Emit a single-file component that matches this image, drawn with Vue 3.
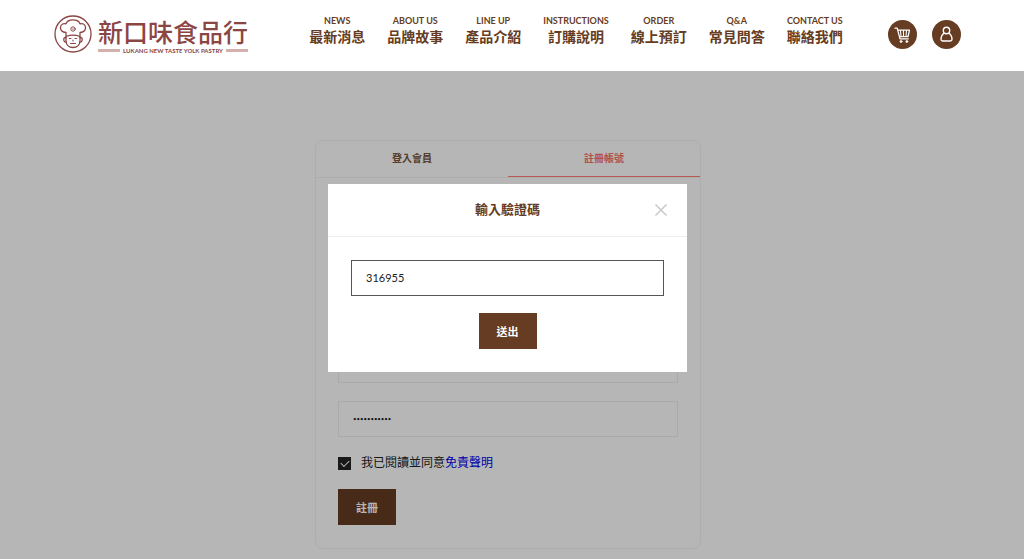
<script setup>
import { ref } from 'vue'

const links = [
  { en: 'NEWS', zh: '最新消息' },
  { en: 'ABOUT US', zh: '品牌故事' },
  { en: 'LINE UP', zh: '產品介紹' },
  { en: 'INSTRUCTIONS', zh: '訂購說明' },
  { en: 'ORDER', zh: '線上預訂' },
  { en: 'Q&A', zh: '常見問答' },
  { en: 'CONTACT US', zh: '聯絡我們' },
]
const name = ref('')
const email = ref('')
const phone = ref('')
const password = ref('abcdefghijk')
const agreed = ref(true)
const code = ref('316955')
const open = ref(true)
</script>

<template>
  <div class="page">
    <header class="header">
      <a class="logo" href="#">
        <svg class="chef" viewBox="0 0 38 38" fill="none" stroke="#8b4644" stroke-width="1.3" stroke-linecap="round" stroke-linejoin="round" aria-hidden="true">
          <circle cx="19" cy="19" r="18" />
          <path d="M12 21.500V17.500C8 17.500 6 14.800 6.500 12C7 9.200 9.800 8 12 8.800C12.800 6.200 15.500 4.800 19 4.800C22.500 4.800 25.200 6.200 26 8.800C28.200 8 31 9.200 31.500 12C32 14.800 30 17.500 26 17.500V21.500Q19 18.800 12 21.500Z" />
          <path d="M12 22V26.500Q12.700 32.500 19 32.500Q25.300 32.500 26 26.500V22" />
          <path d="M12 22.500Q9.500 22.300 9.800 25Q10.200 27.500 12.300 27M26 22.500Q28.500 22.300 28.200 25Q27.800 27.500 25.700 27" />
          <circle cx="19" cy="14" r="2.200" stroke-width="1" />
          <path d="M19 13.700V14.300M15.300 23.500H17M21 23.500H22.700M19 25V26M16.500 28.500H21.500" stroke-width="1.100" />
        </svg>
        <span class="brand">
          <span class="brand-name">新口味食品行</span>
          <span class="tagline"><i></i><span>LUKANG NEW TASTE YOLK PASTRY</span><i></i></span>
        </span>
      </a>
      <nav class="nav" aria-label="主選單">
        <a v-for="link in links" :key="link.en" href="#">
          <span class="en">{{ link.en }}</span>
          <span class="zh">{{ link.zh }}</span>
        </a>
      </nav>
      <div class="tools">
        <button type="button" aria-label="購物車">
          <svg viewBox="0 0 29 29" fill="none" stroke="#fff" stroke-width="1.300" stroke-linecap="round" stroke-linejoin="round">
            <path d="M7 8.200H9.200L12 18.800H20.300M9.700 10.200H21.500L20 16.600H11.400" />
            <path d="M12.500 10.500L13 16.300M15.500 10.500V16.300M18.500 10.500L18 16.300" stroke-width="1.100" />
            <circle cx="13" cy="21.500" r="1" fill="#fff" stroke-width=".8" />
            <circle cx="18.800" cy="21.500" r="1" fill="#fff" stroke-width=".8" />
          </svg>
        </button>
        <button type="button" aria-label="會員">
          <svg viewBox="0 0 29 29" fill="none" stroke="#fff" stroke-width="1.400" stroke-linejoin="round">
            <circle cx="14.500" cy="10.500" r="3.200" />
            <path d="M12.300 13C10 14.600 9 17 9 19.300Q9 21 10.700 21H18.300Q20 21 20 19.300C20 17 19 14.600 16.700 13" />
          </svg>
        </button>
      </div>
    </header>

    <main class="main">
      <section class="card">
        <div class="tabs" role="tablist">
          <button type="button" role="tab" aria-selected="false">登入會員</button>
          <button type="button" role="tab" aria-selected="true" class="active">註冊帳號</button>
        </div>
        <form class="form" @submit.prevent>
          <input v-model="name" class="field" type="text" aria-label="姓名">
          <input v-model="email" class="field" type="email" aria-label="電子郵件">
          <input v-model="phone" class="field" type="tel" aria-label="手機">
          <input v-model="password" class="field password" type="password" aria-label="密碼">
          <div class="agree">
            <input id="agree" v-model="agreed" type="checkbox">
            <label for="agree">我已閱讀並同意<a href="#">免責聲明</a></label>
          </div>
          <button class="submit" type="submit">註冊</button>
        </form>
      </section>
    </main>

    <div v-if="open" class="overlay">
      <div class="modal" role="dialog" aria-modal="true" aria-labelledby="modal-title">
        <div class="modal-head">
          <h2 id="modal-title">輸入驗證碼</h2>
          <button type="button" class="close" aria-label="關閉" @click="open = false">
            <svg viewBox="0 0 12 12" stroke="#ccc" stroke-width="1.700" stroke-linecap="round">
              <path d="M1 1L11 11M11 1L1 11" />
            </svg>
          </button>
        </div>
        <form class="modal-body" @submit.prevent>
          <input v-model="code" class="field code" type="text" aria-labelledby="modal-title">
          <button class="submit" type="submit">送出</button>
        </form>
      </div>
    </div>
  </div>
</template>

<style>
body {
  margin: 0;
}
</style>

<style scoped>
.page,
.page * {
  box-sizing: border-box;
}
.page {
  min-height: 100vh;
  display: flex;
  flex-direction: column;
  font-family: Lato, "Noto Sans CJK TC", sans-serif;
  color: #222;
  background: #fff;
}
button,
input {
  font-family: inherit;
  border-radius: 0;
}
a {
  text-decoration: none;
}
.header {
  position: relative;
  z-index: 2;
  display: flex;
  justify-content: space-between;
  padding: 15px 63px 18px 54px;
  background: #fff;
}
.logo {
  display: flex;
  gap: 6px;
  height: 38px;
  color: #8b4644;
}
.chef {
  width: 38px;
  height: 38px;
}
.brand {
  display: flex;
  flex-direction: column;
  padding-top: 1px;
}
.brand-name {
  font-size: 25px;
  line-height: 32px;
  font-weight: 500;
}
.tagline {
  display: flex;
  align-items: center;
  gap: 3px;
  font-size: 6px;
  line-height: 5px;
  font-weight: 700;
  white-space: nowrap;
}
.tagline i {
  flex: 1;
  height: 3px;
  background: #d3b0ae;
}
.nav {
  display: flex;
  gap: 22px;
  height: 38px;
  margin-left: 16px;
}
.nav a {
  display: flex;
  flex-direction: column;
  align-items: center;
  color: #663c22;
  font-weight: 700;
  white-space: nowrap;
}
.en {
  font-size: 9px;
  line-height: 12px;
}
.zh {
  font-size: 14px;
  line-height: 20px;
}
.tools {
  display: flex;
  gap: 15px;
  padding-top: 5px;
}
.tools button {
  width: 29px;
  height: 29px;
  padding: 0;
  border: 0;
  border-radius: 50%;
  background: #663c22;
}
.tools svg {
  display: block;
}
.main {
  flex: 1;
  padding: 69px 8px 10px 0;
}
.card {
  max-width: 386px;
  margin: 0 auto;
  border: 1px solid #f3f3f3;
  border-radius: 8px;
}
.tabs {
  display: flex;
  border-bottom: 1px solid #f3f3f3;
}
.tabs button {
  flex: 1;
  height: 36px;
  padding: 0 0 2px;
  border: 0;
  border-bottom: 1px solid transparent;
  background: none;
  color: #7a5238;
  font-size: 10px;
  font-weight: 700;
}
.tabs button.active {
  color: #fa7468;
  border-bottom: 1px solid #ff7f74;
}
.form {
  display: flex;
  flex-direction: column;
  align-items: flex-start;
  gap: 18px;
  padding: 61px 22px 23px;
}
.field {
  width: 100%;
  height: 36px;
  padding: 0 14px 2px;
  border: 1px solid #eee;
  background: #fff;
  color: #222;
  font-size: 11px;
  outline: 0;
}
.password {
  font-size: 6px;
}
.agree {
  display: flex;
  align-items: center;
  gap: 10px;
  font-size: 12px;
  line-height: 16px;
}
.agree input {
  appearance: none;
  display: grid;
  place-items: center;
  width: 13px;
  height: 13px;
  margin: 0;
  border: 1px solid #222;
}
.agree input:checked {
  background: #222;
}
.agree input:checked::after {
  content: "";
  width: 7px;
  height: 4px;
  border: solid #fff;
  border-width: 0 0 1px 1px;
  transform: translateY(-1px) rotate(-45deg);
}
.agree a {
  color: #00e;
}
.submit {
  width: 58px;
  height: 36px;
  padding: 0 0 1px;
  border: 0;
  background: #663c22;
  color: #fff;
  font-size: 11px;
  font-weight: 700;
}
.overlay {
  position: fixed;
  inset: 0;
  display: flex;
  align-items: center;
  justify-content: center;
  padding: 0 9px 3px 0;
  background: rgba(0, 0, 0, 0.286);
}
.modal {
  width: 100%;
  max-width: 359px;
  background: #fff;
}
.modal-head {
  position: relative;
  padding: 15px 16px 17px;
  border-bottom: 1px solid #eee;
}
.modal-head h2 {
  margin: 0;
  text-align: center;
  color: #663c22;
  font-size: 13px;
  line-height: 20px;
  font-weight: 700;
}
.close {
  position: absolute;
  top: 20px;
  right: 20px;
  width: 12px;
  height: 12px;
  padding: 0;
  border: 0;
  background: none;
}
.close svg {
  display: block;
}
.modal-body {
  display: flex;
  flex-direction: column;
  align-items: center;
  gap: 17px;
  padding: 23px;
}
.code {
  border-color: #555;
}
</style>
